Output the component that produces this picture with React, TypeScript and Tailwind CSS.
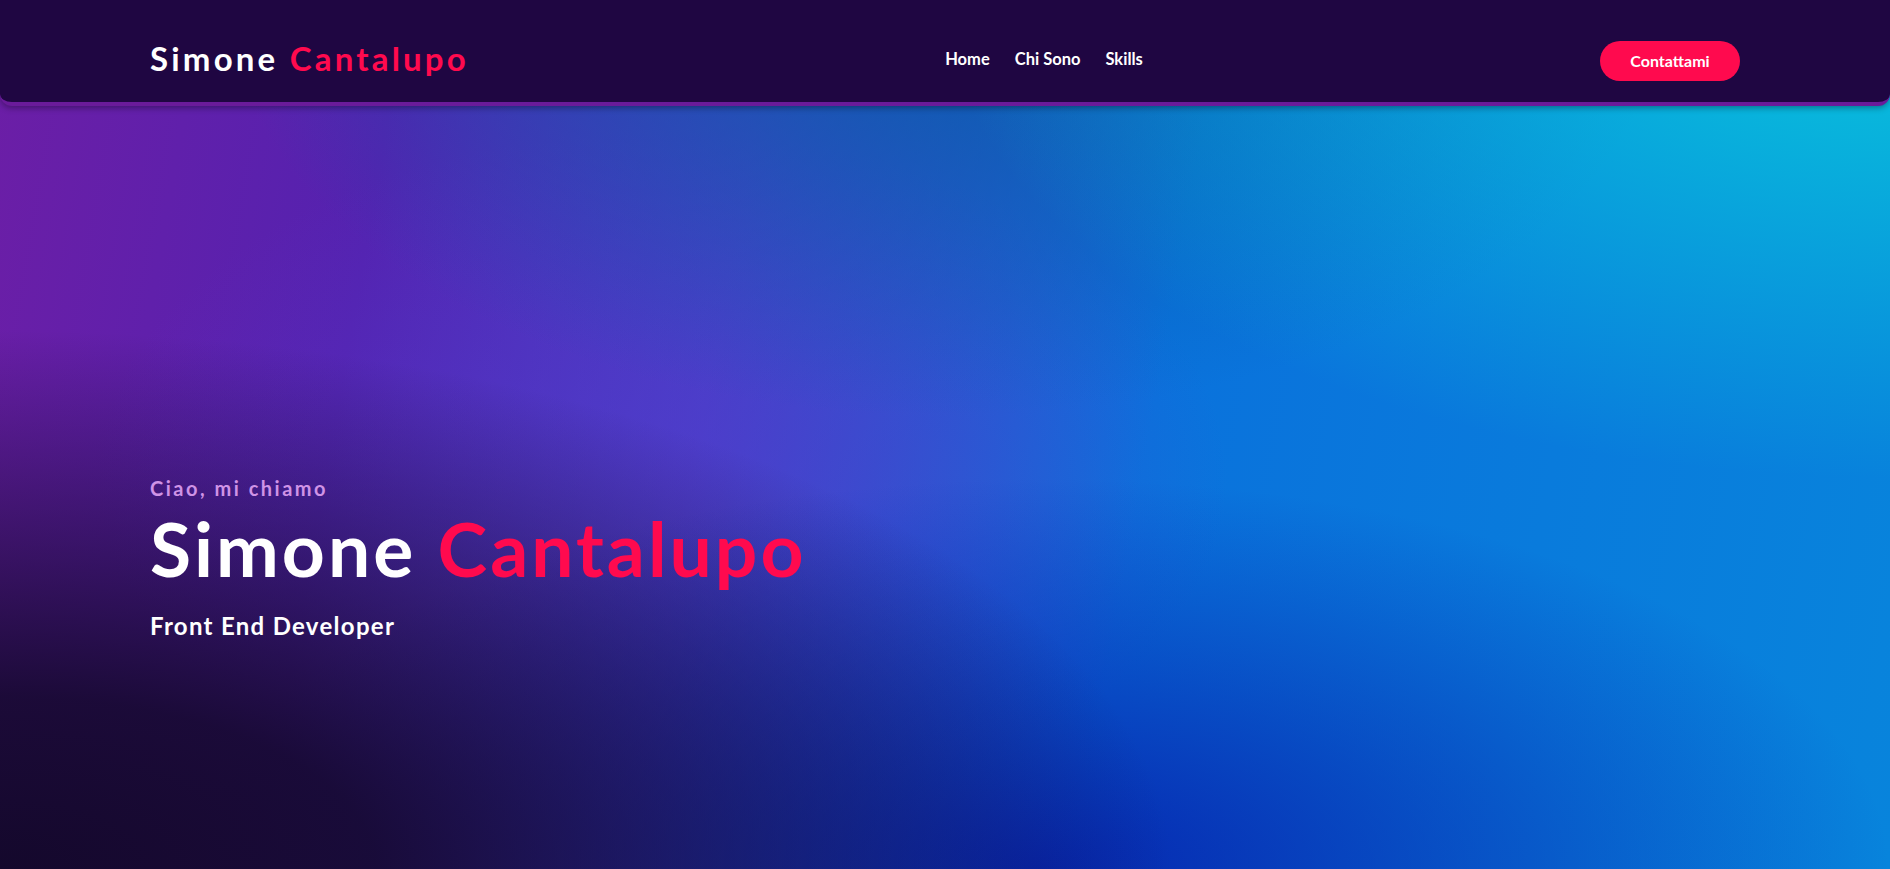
export default function App() {
  return (
    <div
      className="relative h-[869px] w-full overflow-hidden font-['Lato','Open_Sans',sans-serif] text-white bg-[radial-gradient(ellipse_62%_62%_at_0%_100%,rgba(20,8,44,1)_0%,rgba(20,8,44,0.9)_32%,rgba(20,8,44,0)_100%),radial-gradient(ellipse_50%_55%_at_100%_0%,rgba(8,198,220,1)_0%,rgba(8,198,220,0)_100%),radial-gradient(ellipse_38%_48%_at_50%_0%,rgba(8,92,168,0.9)_0%,rgba(8,92,168,0)_100%),radial-gradient(ellipse_45%_45%_at_55%_100%,rgba(6,30,170,0.9)_0%,rgba(6,30,170,0)_100%),radial-gradient(ellipse_30%_40%_at_35%_55%,rgba(84,58,204,0.55)_0%,rgba(84,58,204,0)_100%),linear-gradient(100deg,#6c1ea6_0%,#5422b0_20%,#4640c8_38%,#0a72dc_60%,#0884dc_100%)]"
    >
      <header className="flex h-[106px] items-center justify-between rounded-b-[12px] border-b-4 border-[#6a1b9a] bg-[#1f0642] px-[150px] pt-[16px] shadow-[0_2px_6px_rgba(0,0,0,0.35)]">
        <a className="w-[320px] text-[33px] font-bold tracking-[3.2px] whitespace-nowrap">
          <span className="text-white">Simone </span>
          <span className="text-[#ff0a4e]">Cantalupo</span>
        </a>
        <nav className="ml-[18px] flex items-center gap-[25px] text-[16.5px] font-bold">
          <a>Home</a>
          <a>Chi Sono</a>
          <a>Skills</a>
        </nav>
        <button className="mt-[4px] flex h-[40px] w-[140px] items-center justify-center rounded-full bg-[#ff0a4e] text-[16px] font-bold text-white">
          Contattami
        </button>
      </header>

      <section className="flex flex-col px-[150px] pt-[370px]">
        <p className="text-[20px] leading-[24px] font-bold tracking-[2.5px] text-[#cf93e6]">
          Ciao, mi chiamo
        </p>
        <h1 className="mt-[8px] text-[75px] leading-[80px] font-bold tracking-[3px] whitespace-nowrap">
          <span className="text-white">Simone </span>
          <span className="text-[#ff0a4e]">Cantalupo</span>
        </h1>
        <h2 className="mt-[24px] text-[24px] leading-[28px] font-bold tracking-[1.3px]">
          Front End Developer
        </h2>
      </section>
    </div>
  );
}
